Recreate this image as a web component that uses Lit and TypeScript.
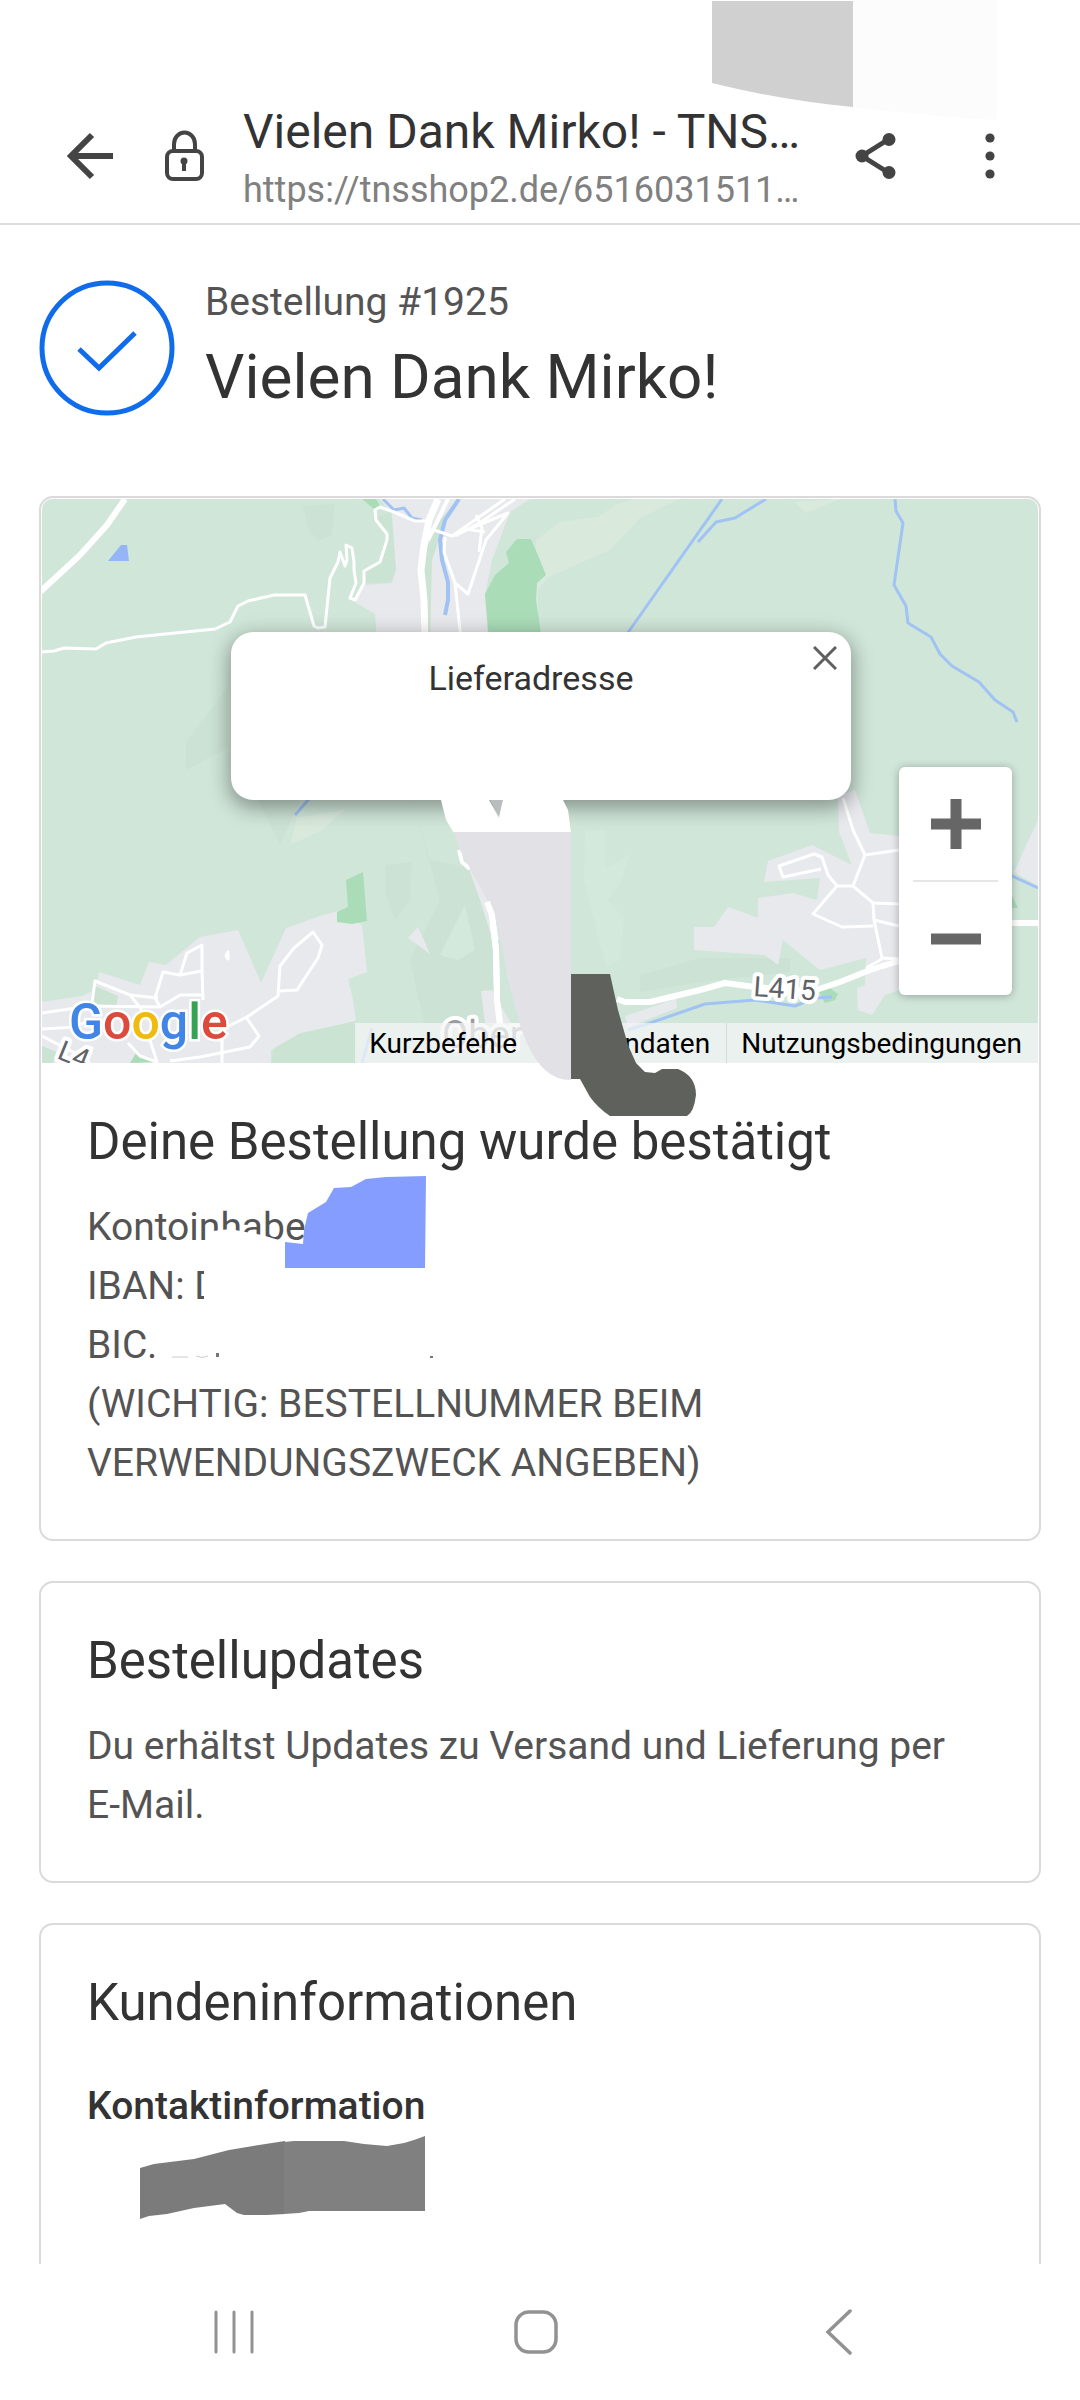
import { LitElement, html, css, svg } from "lit";
import { customElement } from "lit/decorators.js";

const townRoads = [
  "42,1013 90,1006 160,1007 180,995 203,995",
  "160,1007 155,998 163,972 180,975 202,971 202,945 187,953 180,975",
  "202,971 203,1000",
  "92,1003 95,981 130,995 158,998",
  "130,995 142,1010",
  "42,1029 75,1027 90,1020",
  "42,1036 75,1053 92,1048 85,1062",
  "227,1027 247,1017 278,996 280,966 294,948 313,932 322,945 318,958 297,990 280,991",
  "246,1017 259,1036 250,1047 200,1057 170,1061",
  "222,1040 222,1063",
  "128,1043 140,1056 157,1062 150,1040",
  "843,798 853,830 865,855 899,850",
  "865,855 853,886 837,886 828,875 822,857 814,854 779,866 783,877 821,869",
  "837,886 813,914 842,927 873,926",
  "853,886 873,903 899,904",
  "873,903 874,920 899,926",
  "874,920 882,958 899,959",
  "866,968 882,959",
  "434,530 452,536 505,499",
  "452,536 508,513 486,540 468,594 455,583 444,552 445,537",
  "455,583 461,640",
  "515,499 481,522 455,536",
  "476,515 482,528 479,552",
  "466,529 485,532",
  "42,652 54,651 64,648 96,649 106,643 136,637 175,633 215,629 230,622 238,606 248,601 274,595 305,595 314,626 318,628 325,627 330,578 338,562 340,552 345,566 347,560 346,545 352,548 354,562 354,570 356,583 350,598 355,600 364,583 364,571 380,562 387,540 387,534 376,520 375,510 380,507 394,512 415,521 426,521",
];

const streams = [
  "383,499 394,510 404,508 412,518 422,520",
  "722,499 627,634",
  "766,499 735,518 716,522 698,542",
  "895,499 896,511 903,523 894,585 906,606 908,623 931,637 940,654 952,666 979,682 995,700 1013,712 1017,722",
  "309,799 295,815",
  "628,1030 650,1023 705,1004 755,1000 795,1006 815,998 832,997",
  "1010,875 1038,888",
  "372,1028 362,1063",
];

const mapDrawing = svg`
  <rect x="42" y="499" width="996" height="564" fill="#d0e6d9" />
  <g fill="#cbe2d4">
    <path d="M303 506L335 504L332 535L318 541L308 528Z" />
    <path d="M228 686L186 742V770L228 748Z" />
    <path d="M385 865L411 862L410 900L395 920L386 895Z" />
    <path d="M412 800L430 860L470 868L500 935L492 1023H424L410 960L440 900Z" />
    <path d="M640 975L700 958L790 958V972L700 982L640 992Z" />
    <path d="M258 800L280 845L300 800Z" />
  </g>
  <g fill="#d9eadd">
    <path d="M536 540L560 522L598 517L615 505L635 499H680L640 518L610 550L548 577L538 590V620L542 632L536 632Z" />
    <path d="M795 502L840 499L806 513Z" />
    <path d="M297 818L345 810L322 830L290 845Z" />
  </g>
  <g fill="#d3e9dc">
    <path d="M585 830H606V868L630 854L620 885L608 900L624 918L620 960L606 966L592 910L584 880Z" />
    <path d="M440 955L465 905L475 950L458 960Z" />
  </g>
  <g fill="#e8e9ed">
    <path d="M380 499H530L510 512L492 560L485 595L488 640H377L375 614L355 602L364 585L392 583L396 570L392 514Z" />
    <path d="M42 1002L82 996L95 990L99 972L140 985L149 962L166 965L200 937L238 930L261 983L286 928L320 916L338 911L362 925L367 972L348 979L353 1000L356 1021L300 1033L271 1050V1063H42Z" />
    <path d="M694 927H714L728 907L758 918V898L793 893L817 900L820 878L764 882L768 861L812 845L852 865L839 832L838 796L855 790L870 833L899 836V990L885 995L872 1015L858 1010L857 988L865 985L866 958L820 970L783 940L778 965L765 955L694 950Z" />
    <path d="M1014 872L1038 820V886Z" />
    <path d="M408 938L418 927L430 954Z" />
    <path d="M625 1016L676 999L677 1008L628 1027Z" />
    <path d="M468 866L480 900L492 938L500 940L492 905Z" />
    <path d="M481 991L492 990L512 1025L485 1023Z" />
  </g>
  <g fill="#cbe3d3">
    <path d="M458 499L442 530L432 560L430 640H421V560L440 520Z" />
    <path d="M391 512L396 570L390 582L364 583L366 571L380 562L387 540L387 534L376 518Z" />
    <path d="M93 985L118 996L116 1008L90 1005Z" />
    <path d="M42 1046L62 1054L52 1063H42Z" />
    <path d="M271 1063L275 1048L300 1034L356 1021L358 1063Z" />
  </g>
  <g fill="#aadcb8">
    <path d="M517 539H531L537 553L546 575L537 583L536 600L542 640H489L485 594L495 575L509 563L506 552Z" />
    <path d="M346 880L363 872L367 921L352 924L337 922V912L348 907Z" />
    <path d="M362 499H376L380 506L374 509Z" />
    <path d="M130 1063L136 1053L155 1062Z" />
    <path d="M838 994L835 1000L825 1003L818 990L830 988Z" />
    <path d="M1012 896L1018 908H1012Z" />
  </g>
  <path d="M108 561L121 545H127L129 561Z" fill="#96b5f8" />
  <g fill="none" stroke="#a0c3f3" stroke-width="3" stroke-linejoin="round">
    ${streams.map((p) => svg`<polyline points=${p} />`)}
    <polyline points="459,499 445,520 440,540 442,560 448,582 448,600 445,615" stroke-width="4" />
  </g>
  <g fill="none" stroke="#fff" stroke-width="3" stroke-linejoin="round">
    ${townRoads.map((p) => svg`<polyline points=${p} />`)}
    <g stroke-width="6">
      <polyline points="125,499 107,525 80,555 40,592" />
      <polyline points="617,999 625,1002 650,1002 700,990 725,983 755,987 810,992 840,982 870,970 899,961" />
      <polyline points="1010,923 1040,923" />
      <polyline points="448,499 438,520 428,540" stroke-width="4" />
      <polyline points="438,499 429,520 424,545 421,570 424,600 425,640" stroke-width="7" />
      <polyline points="488,902 492,915 496,950 497,1000 500,1025" />
    </g>
    <path d="M459 850L462 862L470 869" stroke-width="4" />
    <path d="M226 956L228 952V959Z" />
  </g>
  <g fill="#5f6368" stroke="#fff" stroke-width="8" paint-order="stroke" stroke-linejoin="round" font-size="28">
    <text x="753" y="996" transform="rotate(4 753 996)">L415</text>
    <text x="56" y="1058" transform="rotate(22 56 1058)">L4</text>
    <text x="442" y="1048" font-size="38" fill="#9a9da0">Ober</text>
  </g>
`;

@customElement("order-map")
export class OrderMap extends LitElement {
  static styles = css`
    :host {
      display: block;
      position: relative;
      padding: 1px;
      font-family: Roboto, "Liberation Sans", sans-serif;
    }
    .canvas {
      display: block;
      width: 100%;
      height: 564px;
      border-radius: 10px 10px 0 0;
    }
    .popover {
      position: absolute;
      top: 134px;
      left: 50%;
      width: 620px;
      margin-left: -309px;
      height: 168px;
      box-sizing: border-box;
      padding: 26px 34px 26px 14px;
      border-radius: 22px;
      background: #fff;
      box-shadow: 0 6px 20px 2px rgba(0, 0, 0, 0.36);
      color: #333;
      font-size: 34px;
      line-height: 40px;
      text-align: center;
    }
    .popover p {
      margin: 0;
    }
    button {
      display: grid;
      place-items: center;
      margin: 0;
      padding: 0;
      border: 0;
      background: none;
    }
    .close {
      position: absolute;
      top: 0;
      right: 0;
      width: 52px;
      height: 52px;
    }
    .zoom {
      position: absolute;
      right: 27px;
      bottom: 69px;
      width: 113px;
      border-radius: 6px;
      background: #fff;
      box-shadow: 0 1px 8px rgba(0, 0, 0, 0.3);
    }
    .zoom button {
      width: 100%;
      height: 113px;
    }
    .zoom hr {
      margin: 0 14px;
      height: 2px;
      border: 0;
      background: #e6e6e6;
    }
    .logo {
      position: absolute;
      left: 26px;
      bottom: 8px;
      width: 172px;
      height: 60px;
      font-weight: 500;
    }
    .legal {
      position: absolute;
      right: 1px;
      bottom: 1px;
      display: flex;
      font-size: 28px;
      line-height: 38px;
    }
    .legal a {
      padding: 2px 16px 0 14px;
      background: rgba(245, 245, 245, 0.72);
      color: #000;
      text-decoration: none;
    }
    .legal .data {
      padding-left: 24px;
      border-right: 1px solid #d3dcd7;
    }
    .strokes {
      position: absolute;
      left: 50%;
      top: 302px;
      width: 258px;
      height: 318px;
      margin-left: -100px;
      z-index: 1;
      pointer-events: none;
    }
  `;

  render() {
    return html`
      <svg class="canvas" viewBox="42 499 996 564" preserveAspectRatio="xMidYMid slice" aria-hidden="true">
        ${mapDrawing}
      </svg>
      <svg class="logo" viewBox="0 0 172 60" role="img" aria-label="Google">
        <text x="2" y="43" font-size="50" stroke="#fff" stroke-width="5" paint-order="stroke">
          <tspan fill="#4285e8">G</tspan><tspan fill="#db4a3c">o</tspan><tspan fill="#f0bb10">o</tspan><tspan fill="#4285e8">g</tspan><tspan fill="#35a353">l</tspan><tspan fill="#db4a3c">e</tspan>
        </text>
      </svg>
      <div class="legal">
        <a href="#kurzbefehle">Kurzbefehle</a>
        <a class="data" href="#kartendaten">Kartendaten</a>
        <a href="#nutzung">Nutzungsbedingungen</a>
      </div>
      <div class="zoom">
        <button aria-label="Vergrößern">
          <svg width="50" height="50" viewBox="0 0 50 50"><path d="M0 25H50M25 0V50" stroke="#666" stroke-width="11" /></svg>
        </button>
        <hr />
        <button aria-label="Verkleinern">
          <svg width="50" height="50" viewBox="0 0 50 50"><path d="M0 25H50" stroke="#666" stroke-width="11" /></svg>
        </button>
      </div>
      <div class="popover">
        <p>Lieferadresse</p>
        <button class="close" aria-label="Schließen">
          <svg width="24" height="24" viewBox="0 0 24 24"><path d="M1 1L23 23M23 1L1 23" stroke="#5f5f5f" stroke-width="3" /></svg>
        </button>
      </div>
      <svg class="strokes" viewBox="440 800 258 318" aria-hidden="true">
        <path d="M441 800H489L499 818L502 800H563L568 810L571 833H454L446 820Z" fill="#fff" />
        <path d="M490 800H503L499 816Z" fill="#b9bdbd" />
        <path d="M454 832H571V1080Q556 1080 545 1070Q530 1056 520 1025L508 980L499 930L490 905L470 868L460 850Z" fill="#e2e2e6" />
        <path d="M571 974H610L618 1010L628 1045L636 1063L645 1072L655 1073L662 1069H678Q696 1076 696 1095Q694 1112 687 1116H610Q598 1108 590 1097L580 1079H571Z" fill="#5f615d" />
        <path d="M487 902L492 915L496 950L497 1000L500 1023" fill="none" stroke="#fff" stroke-width="6" />
      </svg>
    `;
  }
}

@customElement("app-root")
export class AppRoot extends LitElement {
  static styles = css`
    :host {
      display: flex;
      flex-direction: column;
      height: 100vh;
      background: #fff;
      color: #545454;
      font-family: Roboto, "Liberation Sans", sans-serif;
      font-size: 39px;
      line-height: 59px;
    }
    h1,
    h2,
    h3,
    p {
      margin: 0;
      font-weight: 400;
    }
    button {
      display: grid;
      place-items: center;
      margin: 0;
      padding: 0;
      border: 0;
      background: none;
    }
    .bar {
      position: relative;
      display: flex;
      align-items: flex-start;
      padding: 104px 44px 5px;
      border-bottom: 2px solid #dcdcdc;
    }
    .bar button {
      width: 93px;
      height: 104px;
    }
    .bar .share {
      width: 136px;
    }
    .page {
      flex: 1;
      min-width: 0;
      padding-left: 13px;
      font-size: 36px;
      line-height: 56px;
      white-space: nowrap;
      overflow: hidden;
    }
    .page strong {
      display: block;
      color: #333;
      font-weight: 400;
      font-size: 48px;
    }
    .page span {
      display: block;
      padding-top: 2px;
      color: #808080;
    }
    .status-marks {
      position: absolute;
      top: 0;
      right: 83px;
      width: 286px;
      height: 120px;
      pointer-events: none;
    }
    main {
      flex: 1;
      min-height: 0;
      overflow: hidden auto;
      scrollbar-width: none;
      padding: 48px 39px 0;
    }
    .hero {
      display: flex;
      align-items: flex-end;
      gap: 30px;
      padding-bottom: 80px;
    }
    .hero h1 {
      margin-top: 6px;
      color: #333;
      font-size: 62px;
      line-height: 78px;
    }
    .cards {
      display: grid;
      gap: 40px;
    }
    .card {
      border: 2px solid #dadada;
      border-radius: 14px;
    }
    .body {
      padding: 46px;
    }
    .body h2 {
      margin-bottom: 24px;
      color: #333;
      font-size: 51px;
      line-height: 64px;
    }
    .body h3 {
      padding-top: 18px;
      color: #333;
      font-size: 39px;
      font-weight: 500;
    }
    .word {
      white-space: nowrap;
    }
    .bank {
      position: relative;
    }
    .bank-marks {
      position: absolute;
      left: 0;
      top: -28px;
      width: 360px;
      height: 190px;
      pointer-events: none;
    }
    .contact-mark {
      display: block;
      margin: 0 0 120px 53px;
    }
    nav {
      display: flex;
      justify-content: center;
      padding: 0 90px 0 83px;
    }
    nav button {
      flex: 1;
      height: 136px;
    }
  `;

  render() {
    return html`
      <header class="bar">
        <svg class="status-marks" viewBox="711 0 286 120" aria-hidden="true">
          <path d="M853 0H997V120Q920 116 853 107Z" fill="#fcfcfc" />
          <path d="M712 1H853V107Q780 100 712 83Z" fill="#d0d0d0" />
        </svg>
        <button aria-label="Zurück">
          <svg width="48" height="48" viewBox="0 0 48 48" fill="none" stroke="#444" stroke-width="6">
            <path d="M25 3L4 24L25 45M4 24H46" />
          </svg>
        </button>
        <button aria-label="Sichere Verbindung">
          <svg width="44" height="52" viewBox="0 0 44 52" fill="none" stroke="#444" stroke-width="4">
            <rect x="5" y="21" width="35" height="28" rx="6" />
            <path d="M12 21V14A10 11 0 0 1 33 14V21" />
            <circle cx="22" cy="31" r="3.5" fill="#444" stroke="none" />
            <path d="M22 31V41" />
          </svg>
        </button>
        <div class="page">
          <strong>Vielen Dank Mirko! - TNS…</strong>
          <span>https://tnsshop2.de/6516031511…</span>
        </div>
        <button class="share" aria-label="Teilen">
          <svg width="44" height="48" viewBox="0 0 44 48" fill="#444">
            <path d="M36 7L9 24L36 41" fill="none" stroke="#444" stroke-width="5" />
            <circle cx="36" cy="7.5" r="6.5" />
            <circle cx="9" cy="24" r="6.5" />
            <circle cx="36" cy="40.5" r="6.5" />
          </svg>
        </button>
        <button aria-label="Mehr Optionen">
          <svg width="12" height="48" viewBox="0 0 12 48" fill="#444">
            <circle cx="6" cy="6" r="4.6" />
            <circle cx="6" cy="24" r="4.6" />
            <circle cx="6" cy="42" r="4.6" />
          </svg>
        </button>
      </header>

      <main>
        <section class="hero">
          <svg width="136" height="136" viewBox="0 0 136 136" fill="none" stroke="#106cea" stroke-width="5" aria-hidden="true">
            <circle cx="68" cy="68" r="65" />
            <path d="M40 69L60 88L96 53" />
          </svg>
          <div>
            <p>Bestellung #1925</p>
            <h1>Vielen Dank Mirko!</h1>
          </div>
        </section>

        <div class="cards">
          <section class="card">
            <order-map></order-map>
            <div class="body">
              <h2>Deine Bestellung wurde bestätigt</h2>
              <div class="bank">
                <p>Kontoinhaber</p>
                <p>IBAN: D</p>
                <p>BIC:</p>
                <p>(WICHTIG: BESTELLNUMMER BEIM VERWENDUNGSZWECK ANGEBEN)</p>
                <svg class="bank-marks" viewBox="87 1170 360 190" aria-hidden="true">
                  <path d="M205 1248L207 1236L213 1231L230 1229L262 1235L282 1241L304 1246V1254H205Z" fill="#fff" />
                  <path d="M307 1220H345V1260H307ZM204 1262H235V1310H204ZM147 1320H162V1348H147Z" fill="#fff" />
                  <path d="M285 1242L303 1244L304 1230L308 1213L326 1202L334 1188L351 1187L366 1179L386 1177L426 1176L425 1268H285Z" fill="#849dfe" />
                  <path d="M216 1353H219V1357H216ZM430 1356H433V1358H430Z" fill="#777" />
                  <path d="M172 1357H188M196 1356Q202 1359 208 1356" stroke="#ccc" fill="none" />
                </svg>
              </div>
            </div>
          </section>

          <section class="card">
            <div class="body">
              <h2>Bestellupdates</h2>
              <p>Du erhältst Updates zu Versand und Lieferung per <span class="word">E-Mail.</span></p>
            </div>
          </section>

          <section class="card">
            <div class="body">
              <h2>Kundeninformationen</h2>
              <h3>Kontaktinformation</h3>
              <svg class="contact-mark" width="286" height="84" viewBox="141 2134 286 84" aria-hidden="true">
                <path d="M141 2166L155 2162L195 2157L230 2148L260 2143L286 2139V2212L268 2213H245L238 2211L230 2205L226 2202L195 2206L168 2212L150 2214L141 2217Z" fill="#7b7b7b" />
                <path d="M285 2140L295 2139H345L365 2142L388 2144L405 2141L415 2138L426 2134V2209H310L300 2211L285 2212Z" fill="#808080" />
              </svg>
            </div>
          </section>
        </div>
      </main>

      <nav aria-label="Systemnavigation">
        <button aria-label="Letzte Apps">
          <svg width="42" height="44" viewBox="0 0 42 44" stroke="#929292" stroke-width="3" stroke-linecap="round">
            <path d="M3 2V42M21 2V42M39 2V42" />
          </svg>
        </button>
        <button aria-label="Startbildschirm">
          <svg width="44" height="44" viewBox="0 0 44 44" fill="none" stroke="#929292" stroke-width="3.5">
            <rect x="2" y="2" width="40" height="40" rx="13" />
          </svg>
        </button>
        <button aria-label="Zurück">
          <svg width="28" height="46" viewBox="0 0 28 46" fill="none" stroke="#929292" stroke-width="3.5" stroke-linecap="round">
            <path d="M25 2L3 23L25 44" />
          </svg>
        </button>
      </nav>
    `;
  }
}
